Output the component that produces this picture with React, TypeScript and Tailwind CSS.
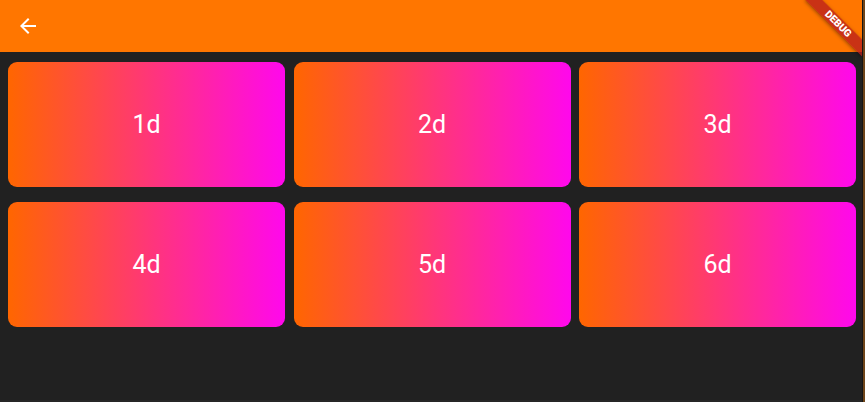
const items = ["1d", "2d", "3d", "4d", "5d", "6d"];

function DebugBanner() {
  return (
    <div className="pointer-events-none absolute right-0 top-0 h-0 w-0 origin-top-left rotate-45">
      <div className="absolute left-[-40px] top-[28px] flex h-[12px] w-[80px] items-center justify-center bg-[#b71c1c]/75 shadow-[0_1px_4px_rgba(0,0,0,0.4)]">
        <span className="text-[10.2px] font-black leading-none text-white [font-family:Roboto,'Liberation_Sans',sans-serif]">
          DEBUG
        </span>
      </div>
    </div>
  );
}

export default function App() {
  return (
    <div className="flex h-[402px] w-[865px] bg-[#212121]">
      <div className="relative flex h-full w-[862px] flex-col overflow-hidden border-b-2 border-[#262626] [font-family:Roboto,'Liberation_Sans',sans-serif]">
        {/* app bar */}
        <header className="flex h-[52px] shrink-0 items-center bg-[#ff7600] px-4">
          <svg width="24" height="24" viewBox="0 0 24 24" fill="white" aria-label="back">
            <path d="M20 11H7.83l5.59-5.59L12 4l-8 8 8 8 1.41-1.41L7.83 13H20v-2z" />
          </svg>
        </header>

        <div className="grid grid-cols-3 gap-x-[8.5px] gap-y-[15px] pl-2 pr-[6px] pt-[10px]">
          {items.map((label) => (
            <div
              key={label}
              className="flex h-[125px] items-center justify-center rounded-[9px] bg-[linear-gradient(to_right,#ff6600,#ff08ec)]"
            >
              <span className="text-[25px] text-white">{label}</span>
            </div>
          ))}
        </div>

        <DebugBanner />
      </div>
      <div className="h-full w-px bg-[#161616]" />
      <div className="h-full w-[2px] bg-[#6e4419]" />
    </div>
  );
}
